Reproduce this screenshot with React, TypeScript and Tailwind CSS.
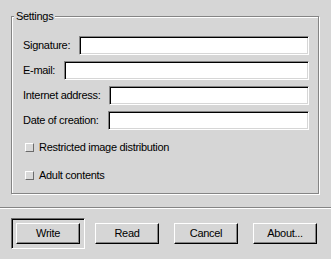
import type { ReactNode } from 'react';

const fields = ['Signature:', 'E-mail:', 'Internet address:', 'Date of creation:'];
const options = ['Restricted image distribution', 'Adult contents'];
const buttons = ['Write', 'Read', 'Cancel', 'About...'];

function Field({ label }: { label: string }) {
  return (
    <div className="flex h-[19px] items-center gap-[9px]">
      <span className="whitespace-nowrap">{label}</span>
      <div className="h-full flex-1 border border-t-[#858585] border-l-[#858585] border-b-white border-r-white bg-white shadow-[inset_1px_1px_0_#000,inset_-1px_-1px_0_#d6d6d6]" />
    </div>
  );
}

function Check({ children }: { children: ReactNode }) {
  return (
    <label className="flex h-[19px] items-center gap-[5px] pl-[2px]">
      <span className="size-[9px] border border-t-white border-l-white border-b-[#6b6b6b] border-r-[#6b6b6b] bg-[#d9d9d9]" />
      <span className="whitespace-nowrap">{children}</span>
    </label>
  );
}

function Button({ label, isDefault }: { label: string; isDefault?: boolean }) {
  return (
    <div className="relative">
      {isDefault && (
        <span className="absolute inset-[-5px] border border-t-[#6b6b6b] border-l-[#6b6b6b] border-b-white border-r-white shadow-[inset_1px_1px_0_#000]" />
      )}
      <button className="relative flex h-[21px] w-[64px] items-center justify-center border border-t-white border-l-white border-b-black border-r-black bg-[#d6d6d6] shadow-[inset_-1px_-1px_0_#858585]">
        {label}
      </button>
    </div>
  );
}

export default function App() {
  return (
    <div
      className="h-[259px] w-[331px] overflow-hidden bg-[#d6d6d6] pt-[16px] text-[11px] leading-none tracking-[-0.3px] text-black"
      style={{ fontFamily: '"Liberation Sans", Arial, sans-serif' }}
    >
      <div className="relative ml-[11px] h-[178px] w-[308px] border border-[#858585] shadow-[inset_1px_1px_0_#fff,1px_1px_0_#fff]">
        <span className="absolute left-[2px] top-[-6px] bg-[#d6d6d6] px-[2px]">Settings</span>
        <div className="flex flex-col pl-[11px] pr-[9px] pt-[19px]">
          <div className="flex flex-col gap-[6px]">
            {fields.map((f) => (
              <Field key={f} label={f} />
            ))}
          </div>
          <div className="mt-[8px] flex flex-col gap-[9px]">
            {options.map((o) => (
              <Check key={o}>{o}</Check>
            ))}
          </div>
        </div>
      </div>
      <div className="mt-[13px] border-t border-b border-t-[#858585] border-b-white" />
      <div className="mt-[14px] flex gap-[15px] pl-[16px]">
        {buttons.map((b, i) => (
          <Button key={b} label={b} isDefault={i === 0} />
        ))}
      </div>
    </div>
  );
}
